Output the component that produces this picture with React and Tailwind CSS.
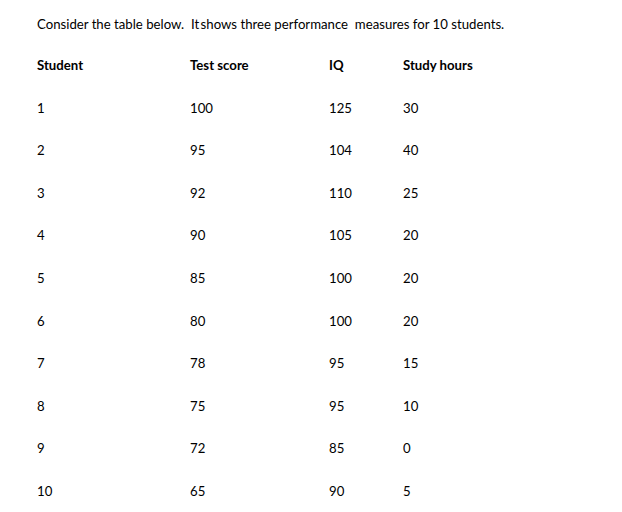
export default function App() {
  const rows = [
    ["1", "100", "125", "30"],
    ["2", "95", "104", "40"],
    ["3", "92", "110", "25"],
    ["4", "90", "105", "20"],
    ["5", "85", "100", "20"],
    ["6", "80", "100", "20"],
    ["7", "78", "95", "15"],
    ["8", "75", "95", "10"],
    ["9", "72", "85", "0"],
    ["10", "65", "90", "5"],
  ];
  return (
    <div className="w-[622px] h-[512px] bg-white text-black pl-[37px] pt-[15px] text-[13.2px] leading-[18px]" style={{ fontFamily: 'Lato, "Open Sans", sans-serif' }}>
      <div className="whitespace-pre">Consider the table below.  It<span className="tracking-[-2px]"> </span>shows three performance  measures for 10 students.</div>
      <div className="grid grid-cols-[153px_139px_74px_1fr] font-bold mt-[23px] h-[18px]">
        <div>Student</div>
        <div>Test score</div>
        <div>IQ</div>
        <div>Study hours</div>
      </div>
      {rows.map((r, i) => (
        <div key={i} className="grid grid-cols-[153px_139px_74px_1fr] mt-[24.6px] h-[18px]">
          {r.map((c, j) => (
            <div key={j}>{c}</div>
          ))}
        </div>
      ))}
    </div>
  );
}
